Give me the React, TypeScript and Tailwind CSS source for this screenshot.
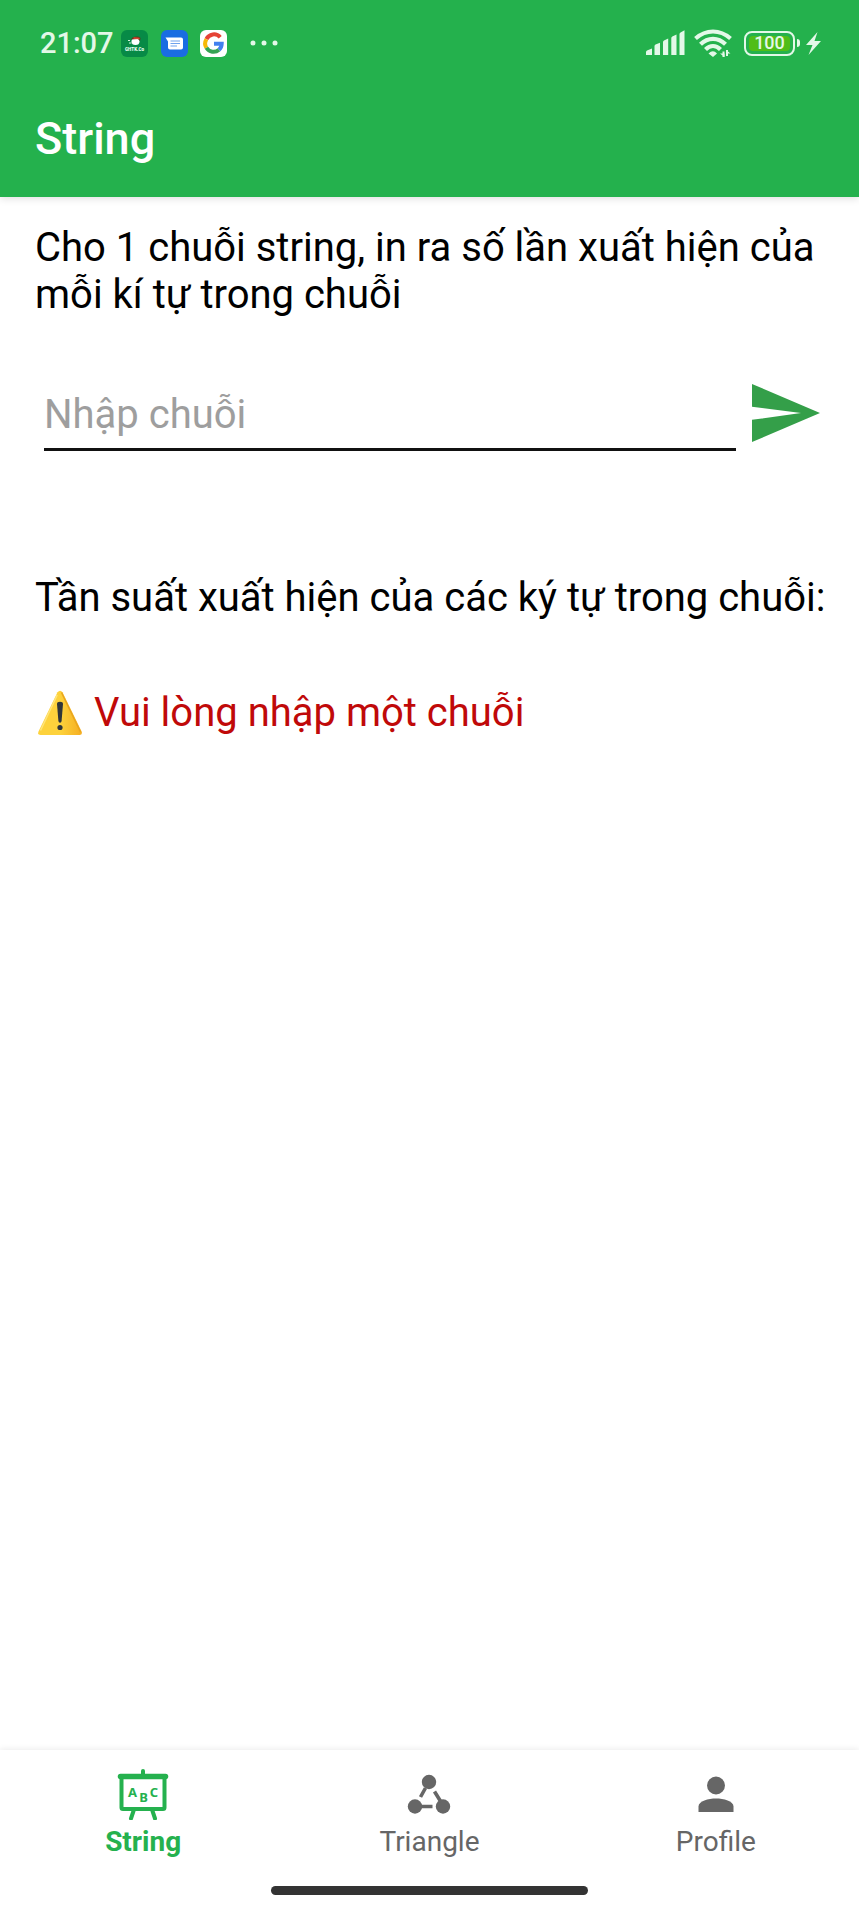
import type { ReactNode } from 'react';

function StatusBar() {
  return (
    <div className="flex h-20 items-center justify-between pt-[6px] pr-[38px] pl-10 text-[#e3f8e8]">
      <div className="flex items-center">
        <span className="text-[29px] leading-8 font-medium">21:07</span>
        <svg className="ml-[7px] size-[27px]" viewBox="0 0 27 27" aria-hidden="true">
          <rect width="27" height="27" rx="6" fill="#078a46" />
          <ellipse cx="14.500" cy="11.500" rx="4" ry="3.600" fill="#fff" />
          <path d="M10 9.500c1-3 7-4 9.500-1.500l-.5 3-2-2z" fill="#5a3a1c" />
          <path d="M12.500 8l6 .5" stroke="#df4433" strokeWidth="1.500" />
          <path d="M7 10.500h2M8 13h2.500" stroke="#d5f1df" strokeWidth="1" />
          <text x="13.500" y="21" textAnchor="middle" fontSize="4.600" fontWeight="900" fill="#e8fff0">GHTK.Co</text>
        </svg>
        <svg className="ml-[13px] size-[27px]" viewBox="0 0 27 27" aria-hidden="true">
          <rect width="27" height="27" rx="6" fill="#1a6de2" />
          <path d="M4.500 7.500H20a2 2 0 0 1 2 2v8a2 2 0 0 1-2 2H9a2 2 0 0 1-2-2v-6z" fill="#fff" />
          <path d="M9.500 11h9.500M9.500 13.500h9.500M9.500 16h6.500" stroke="#6ea3ee" strokeWidth="1.200" />
        </svg>
        <svg className="ml-3 size-[27px]" viewBox="0 0 27 27" aria-hidden="true">
          <rect width="27" height="27" rx="6" fill="#fff" />
          <g fill="none" strokeWidth="4">
            <path d="M20.200 7.200A8.300 8.300 0 0 0 6.400 9.200" stroke="#e54335" />
            <path d="M6.400 9.200a8.300 8.300 0 0 0 0 8.600" stroke="#f7b906" />
            <path d="M6.400 17.800a8.300 8.300 0 0 0 12.600 2" stroke="#34a353" />
            <path d="M19 19.800q2.600-2.300 2.700-6.100H14" stroke="#4280ef" />
          </g>
        </svg>
        <svg className="ml-[23px] h-2 w-7" viewBox="0 0 28 8" fill="currentColor" aria-hidden="true">
          <circle cx="3" cy="4" r="2.500" />
          <circle cx="14" cy="4" r="2.500" />
          <circle cx="25" cy="4" r="2.500" />
        </svg>
      </div>
      <div className="flex items-center">
        <svg className="h-[26px] w-[39px]" viewBox="0 0 39 26" fill="currentColor" aria-label="Signal">
          <path d="M0 25v-3q0-1 1-1.500l5-2V25zM8.500 25V16q0-1 1-1.500l4.500-1.800V25zM17 25V12q0-1 1-1.500l4.200-1.900V25zM25.300 25V8q0-1 1-1.500l4.200-2V25zM33.500 25V4q0-1 1-1.600l4-2.100V25z" />
        </svg>
        <svg className="ml-[9px] h-[29px] w-[38px]" viewBox="0 0 38 29" aria-label="Wi-Fi">
          <g fill="none" stroke="currentColor" strokeWidth="4.200">
            <path d="M1.500 9.500Q9.500 2.500 19 2.500t17.500 7" />
            <path d="M6.500 15.200Q12 9.800 19 9.800t12.500 5.400" />
            <path d="M11.500 20.500Q15 17 19 17t7.500 3.500" />
          </g>
          <path d="M14.500 24.500q4.500-4.500 8.500 0L19 28z" fill="currentColor" />
          <path d="M29.500 28v-5.500M33 21v6" stroke="currentColor" strokeWidth="2" />
          <path d="M26 24.500h4.500V28zM32 21l4.500 3.500H32z" fill="currentColor" />
        </svg>
        <div className="ml-3 flex items-center">
          <div className="flex h-[25px] w-[51px] items-center rounded-lg border-2 border-current p-[3px]">
            <span className="flex h-full w-full items-center justify-center rounded-sm bg-[#50bd18] text-[18px] leading-4 font-medium">
              100
            </span>
          </div>
          <span className="ml-[2px] h-2 w-[3px] rounded-r-sm bg-current" />
        </div>
        <svg className="ml-[6px] h-[23px] w-[15px]" viewBox="0 0 15 23" fill="currentColor" aria-label="Charging">
          <path d="M11.500 0L0 13h6.500L2.500 23 15 9H8.500z" />
        </svg>
      </div>
    </div>
  );
}

function WarningIcon() {
  return (
    <svg className="mr-[11px] ml-[2px] size-[46px] shrink-0" viewBox="0 0 46 46" aria-label="Warning">
      <defs>
        <linearGradient id="warn" x1="0" y1="0" x2="1" y2="0">
          <stop offset="0.500" stopColor="#fdd23c" />
          <stop offset="1" stopColor="#f5ae22" />
        </linearGradient>
      </defs>
      <path d="M20.500 2.200q2.700-3 5 0L44.600 41.500q1.200 3.500-2.100 3.500H3.500q-3.300 0-2-3.500z" fill="url(#warn)" />
      <path d="M20.200 5L3.500 40.500" stroke="#ffe57a" strokeWidth="1.500" fill="none" />
      <path d="M24.500 2.500L43.500 42" stroke="#e9a51e" strokeWidth="1.500" fill="none" />
      <path d="M20 14q0-2.200 3-2.200t3 2.200l-1.400 17q-.2 1.700-1.600 1.700T21.400 31z" fill="#2f353a" />
      <circle cx="23" cy="37.500" r="2.600" fill="#2f353a" />
    </svg>
  );
}

function BoardIcon() {
  return (
    <svg className="h-[52px] w-[52px]" viewBox="0 0 52 52" aria-hidden="true">
      <g fill="none" stroke="currentColor" strokeLinecap="round">
        <path d="M26 3v4" strokeWidth="4" />
        <path d="M3.500 8.500h45" strokeWidth="5.500" />
        <path d="M4.500 10v29.500q0 1.500 1.500 1.500h40q1.500 0 1.500-1.500V10" strokeWidth="4" />
        <path d="M16.500 43l-2.500 7.500M35.500 43l2.500 7.500" strokeWidth="4" />
      </g>
      <g fill="currentColor" fontFamily="Noto Sans, sans-serif" fontSize="13" fontWeight="700" textAnchor="middle">
        <text x="15.500" y="28.500">A</text>
        <text x="26.500" y="33.500">B</text>
        <text x="37" y="28.500">C</text>
      </g>
    </svg>
  );
}

function TriangleIcon() {
  return (
    <svg className="h-[52px] w-[52px]" viewBox="0 0 52 52" fill="currentColor" aria-hidden="true">
      <circle cx="26" cy="14" r="7.200" />
      <circle cx="12" cy="38.500" r="7.200" />
      <circle cx="40" cy="38.500" r="7.200" />
      <path d="M22.500 20L17.500 29M31.500 23.500L38 34M17 38.500h12.500" stroke="currentColor" strokeWidth="3.600" />
    </svg>
  );
}

function PersonIcon() {
  return (
    <svg className="h-[52px] w-[52px]" viewBox="0 0 52 52" fill="currentColor" aria-hidden="true">
      <circle cx="26" cy="17.500" r="9" />
      <path d="M8.500 44v-5.500C8.500 33 18.500 30.500 26 30.500s17.500 2.500 17.500 8V44z" />
    </svg>
  );
}

function NavItem({ label, icon, active = false }: { label: string; icon: ReactNode; active?: boolean }) {
  return (
    <a
      href={'#' + label.toLowerCase()}
      aria-current={active ? 'page' : undefined}
      className={
        'flex flex-1 flex-col items-center gap-[6px] text-[28px] leading-8 ' +
        (active ? 'font-bold text-[#25b14e]' : 'text-[#666666]')
      }
    >
      {icon}
      <span>{label}</span>
    </a>
  );
}

export default function App() {
  return (
    <div className="flex min-h-screen flex-col bg-white font-[Roboto,sans-serif] text-black">
      <header className="bg-[#24b14d] shadow-[0_1px_8px_rgba(0,0,0,0.150)]">
        <StatusBar />
        <div className="flex h-[117px] items-center px-[35px]">
          <h1 className="text-[45px] leading-[52px] font-medium text-white">String</h1>
        </div>
      </header>

      <main className="flex-1 pt-[27px] pr-6 pl-[35px] text-[40px] leading-[47px]">
        <label htmlFor="source" className="block">
          Cho 1 chuỗi string, in ra số lần xuất hiện của mỗi kí tự trong chuỗi
        </label>
        <form className="mt-[60px] flex items-start pr-[11px] pl-[9px]" onSubmit={(e) => e.preventDefault()}>
          <input
            id="source"
            type="text"
            placeholder="Nhập chuỗi"
            className="h-[73px] min-w-0 flex-1 border-b-[3px] border-[#111111] bg-transparent pt-[2px] outline-none placeholder:text-[#9e9e9e]"
          />
          <button type="submit" aria-label="Gửi" className="ml-4 flex h-[70px] w-[72px] items-center text-[#349f49]">
            <svg className="h-[58px] w-[68px]" viewBox="0 0 68 58" fill="currentColor" aria-hidden="true">
              <path d="M0 0l68 29L0 58V35.800l49-6.800L0 22.800z" />
            </svg>
          </button>
        </form>
        <p className="mt-[123px]">Tần suất xuất hiện của các ký tự trong chuỗi:</p>
        <p className="mt-[68px] flex items-center text-[#c00909]" role="alert">
          <WarningIcon />
          Vui lòng nhập một chuỗi
        </p>
      </main>

      <nav className="bg-white pt-[18px] shadow-[0_-1px_6px_rgba(0,0,0,0.080)]">
        <div className="flex">
          <NavItem label="String" icon={<BoardIcon />} active />
          <NavItem label="Triangle" icon={<TriangleIcon />} />
          <NavItem label="Profile" icon={<PersonIcon />} />
        </div>
        <div className="mx-auto mt-7 mb-[13px] h-[9px] w-[37%] rounded-full bg-[#333333]" />
      </nav>
    </div>
  );
}
